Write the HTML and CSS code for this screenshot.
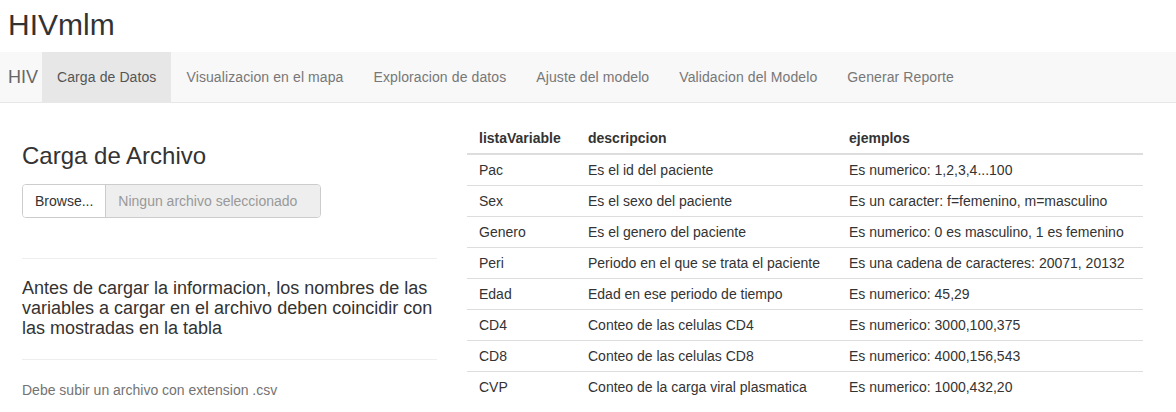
FILE: index.html
```html
<!DOCTYPE html>
<html lang="es">
<head>
<meta charset="utf-8">
<title>HIVmlm</title>
<link rel="stylesheet" href="styles.css">
</head>
<body>
<h2 class="app-title">HIVmlm</h2>
<nav class="navbar">
  <span class="brand">HIV</span>
  <ul class="nav">
    <li class="active"><a>Carga de Datos</a></li>
    <li><a>Visualizacion en el mapa</a></li>
    <li><a>Exploracion de datos</a></li>
    <li><a>Ajuste del modelo</a></li>
    <li><a>Validacion del Modelo</a></li>
    <li><a>Generar Reporte</a></li>
  </ul>
</nav>
<div class="content">
  <div class="sidebar">
    <h3 class="panel-title">Carga de Archivo</h3>
    <div class="file-input">
      <span class="browse">Browse...</span>
      <span class="file-name">Ningun archivo seleccionado</span>
    </div>
    <hr class="sep">
    <h4 class="notice">Antes de cargar la informacion, los nombres de las variables a cargar en el archivo deben coincidir con las mostradas en la tabla</h4>
    <hr class="sep">
    <span class="help">Debe subir un archivo con extension .csv</span>
  </div>
  <table class="vars">
    <colgroup>
      <col class="c1"><col class="c2"><col class="c3">
    </colgroup>
    <thead>
      <tr><th>listaVariable</th><th>descripcion</th><th>ejemplos</th></tr>
    </thead>
    <tbody>
      <tr><td>Pac</td><td>Es el id del paciente</td><td>Es numerico: 1,2,3,4...100</td></tr>
      <tr><td>Sex</td><td>Es el sexo del paciente</td><td>Es un caracter: f=femenino, m=masculino</td></tr>
      <tr><td>Genero</td><td>Es el genero del paciente</td><td>Es numerico: 0 es masculino, 1 es femenino</td></tr>
      <tr><td>Peri</td><td>Periodo en el que se trata el paciente</td><td>Es una cadena de caracteres: 20071, 20132</td></tr>
      <tr><td>Edad</td><td>Edad en ese periodo de tiempo</td><td>Es numerico: 45,29</td></tr>
      <tr><td>CD4</td><td>Conteo de las celulas CD4</td><td>Es numerico: 3000,100,375</td></tr>
      <tr><td>CD8</td><td>Conteo de las celulas CD8</td><td>Es numerico: 4000,156,543</td></tr>
      <tr><td>CVP</td><td>Conteo de la carga viral plasmatica</td><td>Es numerico: 1000,432,20</td></tr>
    </tbody>
  </table>
</div>
</body>
</html>
```

FILE: styles.css
```css
* { box-sizing: border-box; }
html, body { margin: 0; padding: 0; background: #fff; }
body {
  font-family: "Liberation Sans", Arial, Helvetica, sans-serif;
  font-size: 14px;
  line-height: 20px;
  color: #333;
}
.app-title {
  margin: 8px 0 11px 8px;
  font-size: 30px;
  font-weight: normal;
  line-height: 1.1;
  color: #333;
}
.navbar {
  display: flex;
  align-items: stretch;
  height: 51px;
  background: #f8f8f8;
  border-bottom: 1px solid #e7e7e7;
  margin-bottom: 20px;
}
.brand {
  display: flex;
  align-items: center;
  padding: 0 4px 0 8px;
  font-size: 18px;
  color: #666;
}
.nav {
  display: flex;
  list-style: none;
  margin: 0;
  padding: 0;
}
.nav li a {
  display: block;
  padding: 15px 15px;
  line-height: 20px;
  color: #777;
  letter-spacing: 0.1px;
}
.nav li.active a {
  background: #e7e7e7;
  color: #555;
}
.content {
  display: flex;
  align-items: flex-start;
  padding-left: 22px;
}
.sidebar {
  width: 415px;
  margin-right: 30px;
  flex: none;
}
.panel-title {
  margin: 20px 0 15px;
  font-size: 24px;
  font-weight: normal;
  line-height: 1.1;
}
.file-input {
  display: flex;
  height: 34px;
  width: 299px;
  border: 1px solid #ccc;
  border-radius: 4px;
  overflow: hidden;
  margin-bottom: 40px;
}
.browse {
  padding: 6px 12px;
  background: #fff;
  color: #333;
  border-right: 1px solid #ccc;
}
.file-name {
  flex: 1;
  padding: 6px 12px;
  background: #eee;
  color: #999;
}
.sep {
  margin: 20px 0;
  border: 0;
  border-top: 1px solid #eee;
}
.notice {
  margin: 10px 0;
  font-size: 18px;
  font-weight: normal;
  line-height: 1.1;
}
.help {
  display: block;
  color: #737373;
}
.vars {
  width: 676px;
  table-layout: fixed;
  border-collapse: collapse;
  border-spacing: 0;
  flex: none;
}
.vars col.c1 { width: 109px; }
.vars col.c2 { width: 261px; }
.vars col.c3 { width: 306px; }
.vars th, .vars td {
  padding: 5px 12px;
  text-align: left;
  line-height: 20px;
  white-space: nowrap;
}
.vars th {
  font-weight: bold;
  border-bottom: 2px solid #ddd;
}
.vars td {
  border-top: 1px solid #ddd;
}
.vars tbody tr:first-child td { border-top: 0; }
```
